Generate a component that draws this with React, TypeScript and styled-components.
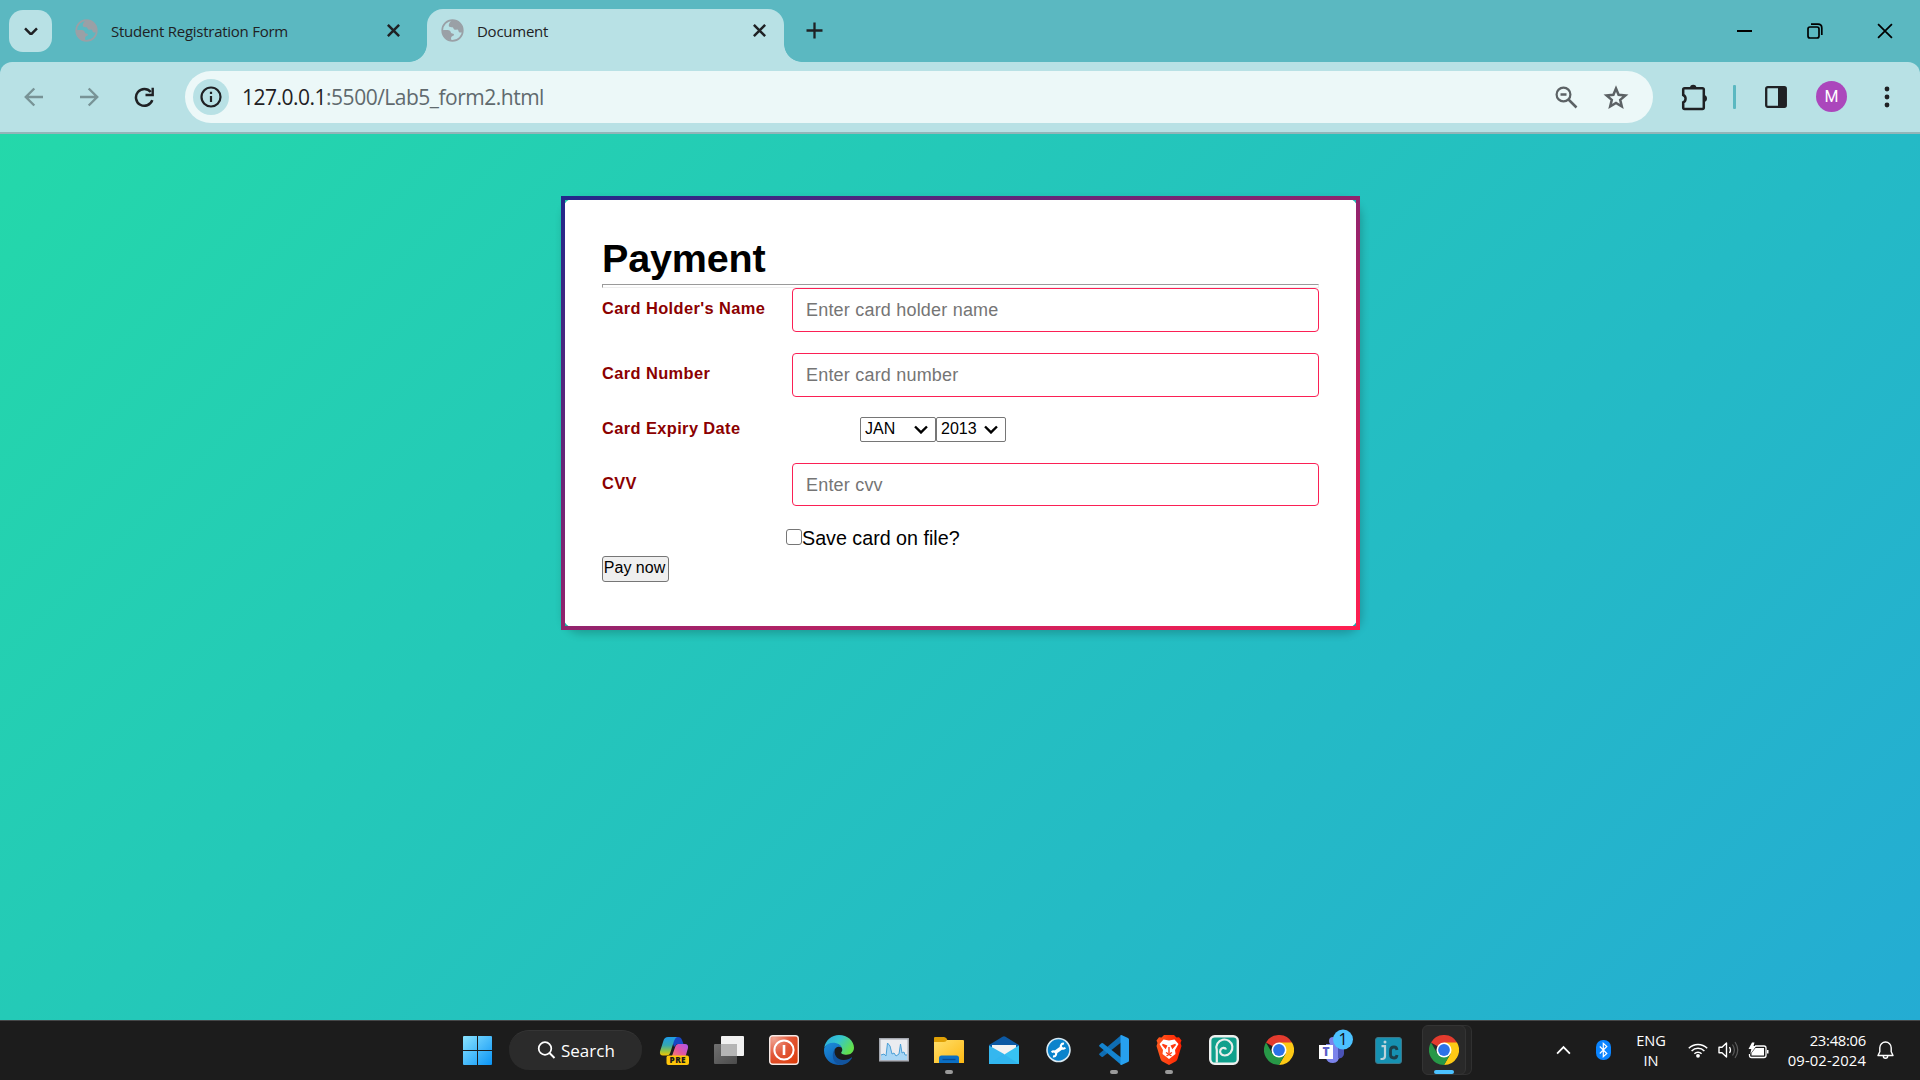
import React from "react";
import styled, { createGlobalStyle } from "styled-components";

const GlobalStyle = createGlobalStyle`
  * { box-sizing: border-box; }
  html, body { margin: 0; padding: 0; }
  body { width: 1920px; height: 1080px; overflow: hidden; }
`;

const UI = `"Open Sans", "Noto Sans", sans-serif`;
const ARIAL = `"Liberation Sans", Arial, sans-serif`;
const INK = "#1f2124";

const Screen = styled.div`
  display: flex;
  flex-direction: column;
  width: 1920px;
  height: 1080px;
  font-family: ${UI};
  color: ${INK};
`;

/* ---------- browser chrome ---------- */

const TabStrip = styled.header`
  display: flex;
  align-items: flex-start;
  height: 62px;
  flex: none;
  background: #5bb8c1;
`;

const TabSearch = styled.button`
  display: grid;
  place-items: center;
  width: 43px;
  height: 42px;
  margin: 10px 0 0 9px;
  padding: 0;
  border: 0;
  border-radius: 14px;
  background: #b8e1e5;
`;

const Tab = styled.div<{ $active?: boolean }>`
  position: relative;
  display: flex;
  align-items: center;
  width: ${(p) => (p.$active ? 357 : 366)}px;
  height: 53px;
  margin: 9px 0 0 ${(p) => (p.$active ? 0 : 9)}px;
  padding: 0 ${(p) => (p.$active ? 18 : 27)}px 10px 14px;
  border-radius: 16px 16px 0 0;
  background: ${(p) => (p.$active ? "#b8e1e5" : "transparent")};
  ${(p) =>
    p.$active &&
    `
    &::before, &::after {
      content: "";
      position: absolute;
      bottom: 0;
      width: 18px;
      height: 18px;
    }
    &::before { left: -18px; background: radial-gradient(circle at 0 0, transparent 17.5px, #b8e1e5 18.2px); }
    &::after { right: -18px; background: radial-gradient(circle at 100% 0, transparent 17.5px, #b8e1e5 18.2px); }
  `}
`;

const TabTitle = styled.span`
  flex: 1;
  margin-left: 13px;
  font-size: 15px;
  line-height: 22px;
  letter-spacing: -0.26px;
  padding-top: 1px;
`;

const NewTab = styled.div`
  margin: 22px 0 0 22px;
  height: 17px;
`;

const WindowButtons = styled.div`
  display: flex;
  margin-left: auto;
  height: 61px;
`;

const WindowButton = styled.div`
  display: grid;
  place-items: center;
  width: 70px;
  &:first-child { margin-right: 1px; }
`;

const Toolbar = styled.div`
  height: 72px;
  flex: none;
  background: #5bb8c1;
`;

const ToolbarInner = styled.div`
  display: flex;
  align-items: center;
  height: 72px;
  padding: 0 6px 0;
  border-radius: 12px 12px 0 0;
  background: #b8e1e5;
  border-bottom: 2px solid #93b5b9;
`;

const NavButton = styled.div`
  display: grid;
  place-items: center;
  width: 55px;
  &:nth-child(3) { padding-left: 2px; }
`;

const AddressBar = styled.div`
  display: flex;
  align-items: center;
  width: 1468px;
  height: 52px;
  margin-left: 14px;
  padding: 0 24px 0 8px;
  border-radius: 26px;
  background: #ecf8f8;
`;

const InfoBadge = styled.div`
  display: grid;
  place-items: center;
  width: 36px;
  height: 36px;
  border-radius: 50%;
  background: #b8e1e5;
`;

const Url = styled.span`
  flex: 1;
  margin-left: 13px;
  font-size: 21px;
  line-height: 30px;
  letter-spacing: -0.5px;
  color: #606a6e;
  b { font-weight: 400; color: ${INK}; }
`;

const UrlIcons = styled.div`
  display: flex;
  align-items: center;
  gap: 25px;
`;

const ToolbarEnd = styled.div`
  display: flex;
  align-items: center;
  margin-left: 28px;
`;

const Divider = styled.div`
  width: 3px;
  height: 24px;
  margin: 0 29px 0 25px;
  border-radius: 1px;
  background: #5bb8c1;
`;

const Avatar = styled.div`
  display: grid;
  place-items: center;
  width: 31px;
  height: 31px;
  margin: 0 37px 1px 29px;
  border-radius: 50%;
  background: #ab47bc;
  color: #fff;
  font: 400 16px Roboto, sans-serif;
`;

/* ---------- page ---------- */

const Page = styled.main`
  display: flex;
  justify-content: center;
  align-items: flex-start;
  flex: 1;
  padding: 62px 0 0 1px;
  background: linear-gradient(135deg, #24d8aa, #24acd3);
  font-family: ${ARIAL};
`;

const Card = styled.form`
  width: 799px;
  height: 434px;
  padding: 36px 37px 0;
  border: 4px solid transparent;
  border-image: linear-gradient(to bottom right, #23288a, #ff1f50) 1;
  border-radius: 19px;
  background: #fff;
  box-shadow: 2px 4px 8px rgba(0, 0, 0, 0.2);
  color: #000;
`;

const Heading = styled.h1`
  margin: 0;
  height: 48px;
  font-size: 39.5px;
  line-height: 45px;
  letter-spacing: -0.15px;
`;

const Rule = styled.hr`
  height: 4px;
  margin: 0;
  border: 1px solid;
  border-color: #9a9a9a #eee #eee #9a9a9a;
`;

const Row = styled.div<{ $gap: number }>`
  display: flex;
  align-items: flex-start;
  margin-bottom: ${(p) => p.$gap}px;
`;

const Label = styled.label<{ $top?: number }>`
  width: 190px;
  padding-top: ${(p) => p.$top ?? 11}px;
  font-size: 16.4px;
  font-weight: 700;
  line-height: 18px;
  letter-spacing: 0.4px;
  color: #8b0000;
`;

const Field = styled.input<{ $h?: number }>`
  flex: 1;
  height: ${(p) => p.$h ?? 44}px;
  padding: ${(p) => (p.$h ? 1 : 0)}px 13px 0;
  border: 1px solid #fb2055;
  border-radius: 4px;
  outline: 0;
  background: #fff;
  font: 18px ${ARIAL};
  letter-spacing: 0.2px;
  &::placeholder { color: #757575; opacity: 1; }
`;

const Selects = styled.div`
  display: flex;
  margin-left: 68px;
`;

const SelectBox = styled.div<{ $w: number }>`
  position: relative;
  width: ${(p) => p.$w}px;
  height: 25px;
  svg { position: absolute; right: 8px; top: 8px; }
`;

const Select = styled.select`
  appearance: none;
  width: 100%;
  height: 25px;
  padding: 0 4px 3px;
  border: 1px solid #767676;
  border-radius: 2px;
  background: #fff;
  font: 16px ${ARIAL};
  color: #000;
`;

const SaveRow = styled.label`
  display: flex;
  align-items: center;
  height: 24px;
  margin: 0 0 6px 184px;
  font-size: 19.7px;
  line-height: 24px;
`;

const Checkbox = styled.input`
  appearance: none;
  width: 16px;
  height: 16px;
  margin: 0 0 2px;
  border: 1px solid #767676;
  border-radius: 3px;
  background: #fff;
`;

const PayButton = styled.button`
  display: block;
  width: 67px;
  height: 26px;
  padding: 0 2px 3px 0;
  border: 1px solid #767676;
  border-radius: 3px;
  background: #efefef;
  font: 16px ${ARIAL};
  color: #000;
  white-space: nowrap;
`;

/* ---------- taskbar ---------- */

const Taskbar = styled.footer`
  display: flex;
  align-items: stretch;
  height: 60px;
  flex: none;
  padding-left: 450px;
  background: #1c1c1c;
  border-top: 1px solid #454748;
  color: #fff;
`;

const AppCell = styled.div<{ $state?: "running" | "focused" }>`
  position: relative;
  display: grid;
  place-items: center;
  width: 55px;
  padding-bottom: 1px;
  &::after {
    content: "";
    position: absolute;
    left: ${(p) => (p.$state === "focused" ? 18 : 24)}px;
    bottom: 6px;
    width: ${(p) => (p.$state === "focused" ? 20 : 8)}px;
    height: 4px;
    border-radius: 2px;
    background: ${(p) => (p.$state === "focused" ? "#4cc2ff" : p.$state ? "#9a9a9a" : "transparent")};
  }
`;

const FocusPlate = styled.div`
  display: grid;
  place-items: center;
  width: 44px;
  height: 50px;
  border: 1px solid #343434;
  border-radius: 6px;
  background: #292929;
  box-shadow: 6px 0 0 -1px #232323, 6px 0 0 0 #303030;
`;

const SearchPill = styled.div`
  display: flex;
  align-items: center;
  width: 133px;
  height: 40px;
  margin: 9px 4px 0;
  padding-left: 28px;
  border-radius: 20px;
  background: #2b2b2b;
  border-top: 1px solid #353535;
  font-size: 17px;
  letter-spacing: 0;
  gap: 5px;
`;

const Tray = styled.div`
  display: flex;
  align-items: center;
  margin-left: auto;
  padding: 0 26px 1px 0;
`;

const TrayIcon = styled.div<{ $w: number }>`
  display: grid;
  place-items: center;
  width: ${(p) => p.$w}px;
`;

const Language = styled.div`
  width: 56px;
  text-align: center;
  font-size: 14.6px;
  line-height: 20px;
  margin: 0 4px 0 0;
`;

const Clock = styled.div`
  width: 93px;
  text-align: right;
  font-size: 14.8px;
  line-height: 20px;
  letter-spacing: -0.28px;
  margin-right: 11px;
  white-space: nowrap;
`;

const DateLine = styled.div`
  letter-spacing: 0.1px;
`;

/* ---------- drawings ---------- */

const Globe = () => (
  <svg width="23" height="23" viewBox="0 0 23 23">
    <circle cx="11.5" cy="11.5" r="10.3" fill="none" stroke="#9aa0a6" strokeWidth="1.7" />
    <path d="M11.500 1.200C15 .8 20 3 21.600 8c.5 2 .4 3.500 0 5-.8.600-1.700.700-2.700.400-1.200-.300-1-2-1.800-2.600-1-.700-2 .500-3.500-.2-1-.500-.700-1.900-1.700-2.300-1-.300-3.500 0-3.800-1.400C7.900 4.900 9 3 11.500 1.200z" transform="translate(-.3 0)" fill="#9aa0a6" />
    <path d="M1.200 11.300c1.800-.300 5.500-.600 7.300.2 1.600.8 1 2.300 2 2.700 1 .500 2.500.300 2.500 1.500 0 1.300-1.800 1-2.500 2-.600 1-.500 2.300-.300 3.800A10.300 10.300 0 0 1 1.200 11.300z" fill="#9aa0a6" />
  </svg>
);

const Cross = ({ size = 12, w = 2.3, color = INK }: { size?: number; w?: number; color?: string }) => (
  <svg width={size} height={size} viewBox="0 0 12 12">
    <path d="M.8.8l10.400 10.400M11.200.8L.8 11.200" stroke={color} strokeWidth={w} />
  </svg>
);

const Arrow = ({ flip }: { flip?: boolean }) => (
  <svg width="20" height="20" viewBox="0 0 20 20" transform={flip ? "scale(-1 1)" : undefined}>
    <path d="M19 10H2.500M10.300 1.500L1.800 10l8.500 8.500" fill="none" stroke="#789396" strokeWidth="2.400" />
  </svg>
);

const Reload = () => (
  <svg width="21" height="21" viewBox="0 0 21 21">
    <path d="M18.300 13.200A8.400 8.400 0 1 1 16.800 5" fill="none" stroke={INK} strokeWidth="2.500" />
    <path d="M19.900.8v8.400h-8.400V6.800h6V.8z" fill={INK} />
  </svg>
);

const Info = () => (
  <svg width="22" height="22" viewBox="0 0 22 22">
    <circle cx="11" cy="11" r="9.500" fill="none" stroke={INK} strokeWidth="2.200" />
    <path d="M11 10v6M11 5.700v2.400" stroke={INK} strokeWidth="2.200" />
  </svg>
);

const ZoomOut = () => (
  <svg width="23" height="23" viewBox="0 0 23 23">
    <circle cx="8.500" cy="8.500" r="6.900" fill="none" stroke="#5c6265" strokeWidth="2.200" />
    <path d="M13.500 13.500l8 8M5.500 8.500h6" stroke="#5c6265" strokeWidth="2.500" />
  </svg>
);

const Star = () => (
  <svg width="26" height="25" viewBox="0 0 26 25">
    <path d="M13 3.500l2.600 6.300 6.800.6-5.200 4.500 1.600 6.600-5.800-3.500-5.800 3.500 1.600-6.600-5.200-4.500 6.800-.6z" fill="none" stroke="#5c6265" strokeWidth="2.500" />
  </svg>
);

const Puzzle = () => (
  <svg width="27" height="27" viewBox="0 0 27 27">
    <path d="M2.200 5.600q0-1.400 1.400-1.400h17.800q1.400 0 1.400 1.400v18q0 1.400-1.400 1.400H3.600q-1.400 0-1.400-1.400v-5.300a4 4 0 0 0 0-7.300z" fill="none" stroke={INK} strokeWidth="2.500" />
    <path d="M9 4a3.200 3.200 0 0 1 6.400 0zM22.500 11a3.300 3.300 0 0 1 0 7z" fill={INK} />
  </svg>
);

const SidePanel = () => (
  <svg width="22" height="22" viewBox="0 0 22 22">
    <rect x="1.200" y="1.200" width="19.600" height="19.600" rx="1.500" fill="none" stroke={INK} strokeWidth="2.300" />
    <path d="M13 1h7.500v20H13z" fill={INK} />
  </svg>
);

const Chevron = ({ w = 13, color = "#000", sw = 2.2, up }: { w?: number; color?: string; sw?: number; up?: boolean }) => (
  <svg width={w} height={w * 0.64} viewBox="0 0 14 9">
    <path d={up ? "M1 8l6-6 6 6" : "M1 1.500l6 6 6-6"} fill="none" stroke={color} strokeWidth={sw} />
  </svg>
);

const WindowsLogo = () => (
  <svg width="29" height="29" viewBox="0 0 29 29">
    <defs>
      <linearGradient id="win" x1="0" y1="0" x2="1" y2="1">
        <stop offset="0" stopColor="#8ae3ff" />
        <stop offset="1" stopColor="#0a94f5" />
      </linearGradient>
    </defs>
    <path d="M1 0h13v14H0V1q0-1 1-1zM15 0h13q1 0 1 1v13H15zM0 15h14v14H1q-1 0-1-1zM15 15h14v13q0 1-1 1H15z" fill="url(#win)" />
  </svg>
);

const SearchGlyph = () => (
  <svg width="19" height="19" viewBox="0 0 19 19">
    <circle cx="8" cy="7.500" r="6.300" fill="none" stroke="#fff" strokeWidth="1.700" />
    <path d="M12.500 12l5 5" stroke="#fff" strokeWidth="2" />
  </svg>
);

const Copilot = () => (
  <svg width="30" height="30" viewBox="0 0 30 30">
    <defs>
      <linearGradient id="cpA" x1="0" y1="0" x2="0" y2="1">
        <stop offset="0" stopColor="#1e9be8" />
        <stop offset=".45" stopColor="#36a7b0" />
        <stop offset=".75" stopColor="#8fc247" />
        <stop offset="1" stopColor="#f5c400" />
      </linearGradient>
      <linearGradient id="cpB" x1="1" y1="0" x2="0" y2="1">
        <stop offset="0" stopColor="#a855f0" />
        <stop offset=".5" stopColor="#e455a0" />
        <stop offset="1" stopColor="#ff8a5c" />
      </linearGradient>
    </defs>
    <path d="M12 2h7q3 0 4 3l1.500 4h-6.500l-3 3z" fill="#1747c5" />
    <path d="M9 2h9q-2 1-3 4l-3.500 11q-1 3.500-4 3.500H4Q.3 20.500 1 16.500L4.500 5.500Q5.500 2 9 2z" fill="url(#cpA)" />
    <path d="M19.500 9H26q3.500 0 3 4l-2 7q-1 4-5 4h-6q-4 0-3-3l3-8.500q1-3.500 3.500-3.500z" fill="url(#cpB)" />
    <rect x="7.500" y="20.500" width="22.500" height="9.500" rx="2" fill="#ffc60a" />
    <text x="18.800" y="28" textAnchor="middle" fontFamily="Open Sans, sans-serif" fontSize="8.200" fontWeight="800" letterSpacing=".4" fill="#1a1a1a">PRE</text>
  </svg>
);

const TaskView = () => (
  <svg width="30" height="28" viewBox="0 0 30 28">
    <defs>
      <linearGradient id="tvA" x1="0" y1="0" x2="1" y2="1">
        <stop offset="0" stopColor="#707070" />
        <stop offset="1" stopColor="#4b4b4b" />
      </linearGradient>
    </defs>
    <rect y="8" width="23" height="20" rx="1" fill="url(#tvA)" />
    <rect x="7" width="23" height="20" rx="1" fill="#f1f1f1" />
    <path d="M7 8h16v12H8q-1 0-1-1z" fill="#b5b5b5" />
  </svg>
);

const Power = () => (
  <svg width="30" height="30" viewBox="0 0 30 30">
    <defs>
      <radialGradient id="pw" cx=".15" cy=".1" r="1.100">
        <stop offset="0" stopColor="#f0a391" />
        <stop offset=".5" stopColor="#e2593b" />
        <stop offset="1" stopColor="#dd3d0c" />
      </radialGradient>
    </defs>
    <rect x=".7" y=".7" width="28.600" height="28.600" rx="3" fill="url(#pw)" stroke="#f5e9e6" strokeWidth="1.400" />
    <circle cx="15" cy="15" r="9.600" fill="none" stroke="#fff" strokeWidth="2" />
    <path d="M15 10v10" stroke="#fff" strokeWidth="2.600" />
  </svg>
);

const Edge = () => (
  <svg width="30" height="30" viewBox="0 0 30 30">
    <defs>
      <linearGradient id="edA" x1="0" y1="0" x2="1" y2=".5">
        <stop offset="0" stopColor="#2ba8e0" />
        <stop offset=".5" stopColor="#35c6cf" />
        <stop offset="1" stopColor="#62e04c" />
      </linearGradient>
      <linearGradient id="edB" x1="0" y1="0" x2=".6" y2="1">
        <stop offset="0" stopColor="#1b8fdc" />
        <stop offset="1" stopColor="#1160b4" />
      </linearGradient>
    </defs>
    <path d="M.3 12.500C1.500 5 7.800 0 15 0c8.500 0 15 6 15 12.800 0 4.200-3.200 7-7.500 7-3.500 0-5.700-1.300-5.200-2.600 1.200-1 1.400-3.200.200-5C14 7.500 5 7 .3 12.500z" fill="url(#edA)" />
    <path d="M.2 13C2 9 6.500 7.300 10.500 7.800c4 .500 6.500 2.500 7.300 5-3-2.200-6.500-1-7.500 2.700-1.500 6 3 11.500 8.500 13.800C9 32 0 25 0 15.500z" fill="url(#edB)" />
    <path d="M11 13.500c-2 6 2.500 12 9 11.500 3.300-.2 5.500-1.300 7.500-2.600.5-.2.700.2.500.6C25.500 27.500 21 30 16.500 30 9 29 6.500 19.500 11 13.500z" fill="#12549e" />
  </svg>
);

const Monitor = () => (
  <svg width="30" height="24" viewBox="0 0 30 24">
    <rect x=".8" y=".8" width="28.400" height="22" fill="#ebecf0" stroke="#a9adb5" strokeWidth="1.500" />
    <path d="M2 17l3-1 2 2 1.500-13L11 8l2 8 2-1 2 3 3-2 1.500-10L23 15l2-1 1 3h2v5H2z" fill="#a8d6f5" />
    <path d="M2 17l3-1 2 2 1.500-13L11 8l2 8 2-1 2 3 3-2 1.500-10L23 15l2-1 1 3h2" fill="none" stroke="#4b9fd6" strokeWidth="1" />
  </svg>
);

const Folder = () => (
  <svg width="30" height="27" viewBox="0 0 30 27">
    <defs>
      <linearGradient id="fo" x1="0" y1="0" x2="1" y2="1">
        <stop offset="0" stopColor="#ffdf6b" />
        <stop offset="1" stopColor="#fdb813" />
      </linearGradient>
    </defs>
    <path d="M0 1q0-1 1-1h9q1.500 0 2.500 1.500L14 4v6H0z" fill="#dfa006" />
    <path d="M13 3h16q1 0 1 1v22H0V5h10q2 0 3-2z" fill="url(#fo)" />
    <path d="M5 26v-5q0-2.500 2.500-2.500h15Q25 18.500 25 21v5z" fill="#0b6fc4" />
    <path d="M8.500 22.500h13" stroke="#064a94" strokeWidth="1.300" />
  </svg>
);

const Mail = () => (
  <svg width="30" height="28" viewBox="0 0 30 28">
    <path d="M0 9L13.500.8q1.500-1 3 0L30 9v3H0z" fill="#0c59a4" />
    <path d="M3 9h24v8l-12 5L3 16z" fill="#f3f3f3" />
    <path d="M0 9.500L15 18v10H0z" fill="#35b7ef" />
    <path d="M30 9.500V28H0z" fill="#37c2f3" />
    <path d="M15 18.300L30 28H0z" fill="#2ba9ea" opacity=".45" />
  </svg>
);

const Wrench = () => (
  <svg width="25" height="26" viewBox="0 0 25 26">
    <circle cx="12.500" cy="13" r="11.500" fill="#0a83cc" stroke="#d9e9f2" strokeWidth="1.600" />
    <path d="M9 15.500l7-5" stroke="#fff" strokeWidth="3.400" />
    <path d="M5.700 15.300a2.500 2.500 0 1 1 1.300 4M19.300 10.700a2.500 2.500 0 1 1-1.300-4" fill="none" stroke="#fff" strokeWidth="2.100" />
  </svg>
);

const VsCode = () => (
  <svg width="30" height="30" viewBox="0 0 30 30">
    <path d="M22 7.500L4 21.800q-.8.500-1.500 0L.5 20q-.8-.8 0-1.600L22 .3z" fill="#0f6db3" />
    <path d="M22 22.500L4 8.200q-.8-.5-1.500 0L.5 10q-.8.800 0 1.600L22 29.700z" fill="#1484cf" />
    <path d="M21.500.3q.8-.4 1.500 0l6 2.800q1 .5 1 1.500v20.800q0 1-1 1.500l-6 2.800q-.7.400-1.500 0z" fill="#27a0ef" />
  </svg>
);

const Brave = () => (
  <svg width="26" height="30" viewBox="0 0 26 30">
    <defs>
      <linearGradient id="br" x1="0" x2="1">
        <stop offset="0" stopColor="#ff5a1f" />
        <stop offset="1" stopColor="#ff2000" />
      </linearGradient>
    </defs>
    <path d="M8 0h10l2.500 2.500 2.500-.3 2.500 3.300-1 2.500 1 3-4 13q-.5 1.500-1.500 2.200L13 30l-7-3.800q-1-.7-1.500-2.200l-4-13 1-3-1-2.500L3 2.200l2.500.3z" fill="url(#br)" />
    <path d="M7.500 4.500l5.500 1 5.500-1L22.500 9l-3.500 6 .5 4-6.500 5-6.500-5 .5-4-3.500-6z" fill="#fff" />
    <path d="M6.500 9.500l4 1.500-1 2zM19.500 9.500l-4 1.500 1 2zM13 12v6M10 17.500l3 1.800 3-1.800M10.500 21l2.500-1.500 2.500 1.500" fill="none" stroke="#ff3a10" strokeWidth="1.400" />
  </svg>
);

const Swirl = () => (
  <svg width="30" height="30" viewBox="0 0 30 30">
    <rect x="1.200" y="1.200" width="27.600" height="27.600" rx="4.500" fill="#0fa08c" stroke="#eef0ef" strokeWidth="2.400" />
    <path d="M7.800 27.500V15a8 8 0 1 1 8 5.500c-3.800 0-5.500-3-4.300-5.700 1.200-2.600 4.800-2.600 5.500-.3" fill="none" stroke="#e8efec" strokeWidth="2.200" />
  </svg>
);

const Chrome = () => (
  <svg width="30" height="30" viewBox="0 0 30 30">
    <path d="M15 15L2 7.500A15 15 0 0 1 28 7.500z" fill="#e33b2e" />
    <path d="M15 7.500h13A15 15 0 0 1 15 30l6.500-11.300z" fill="#fdc915" />
    <path d="M2 7.500A15 15 0 0 0 15 30l6.500-11.300L15 15l-6.500 3.700z" fill="#279847" />
    <circle cx="15" cy="15" r="7.500" fill="#fff" />
    <circle cx="15" cy="15" r="5.900" fill="#2b72e8" />
  </svg>
);

const Teams = () => (
  <svg width="36" height="34" viewBox="0 0 36 34">
    <path d="M18 13h9v7q0 7-6 8-5-1-6-5z" fill="#5b62c9" />
    <path d="M10 13h13v12q0 7-6 7t-7-5z" fill="#7b83eb" />
    <path d="M22 15h6v8q-1 5-6 4z" fill="#4a52b5" />
    <circle cx="17" cy="10" r="4" fill="#7b83eb" />
    <rect x="3" y="14" width="14" height="14" fill="#fff" />
    <text x="10" y="25.300" textAnchor="middle" fontFamily="Open Sans, sans-serif" fontSize="12" fontWeight="800" fill="#5b5fc7">T</text>
    <circle cx="27" cy="8.500" r="10" fill="#4cc2ff" />
    <text x="27" y="14" textAnchor="middle" fontFamily="Open Sans, sans-serif" fontSize="16" fill="#111">1</text>
  </svg>
);

const TeamsHolder = styled.div`
  display: grid;
  place-items: center;
  height: 38px;
  padding-bottom: 4px;
  svg { overflow: visible; }
`;

const Ic = () => (
  <svg width="27" height="27" viewBox="0 0 27 27">
    <rect x=".5" y=".5" width="26" height="26" rx="2.500" fill="#1691b2" stroke="#3d7687" />
    <path d="M6.500 9.200h3.500V19q0 3-3 3H5.500" fill="none" stroke="#bdd4db" strokeWidth="2.200" />
    <circle cx="10" cy="4.900" r="1.500" fill="#bdd4db" />
    <path d="M22 13q-.3-3-3-3-3.500 0-3.500 3.500v4q0 3.500 3.500 3.500 2.700 0 3-3" fill="none" stroke="#1c3f4b" strokeWidth="2.800" />
  </svg>
);

const Bluetooth = () => (
  <svg width="15" height="20" viewBox="0 0 15 20">
    <rect width="15" height="20" rx="7" fill="#0a84ff" />
    <path d="M3.800 6.500l7 7-3.500 3.200V3.300l3.500 3.200-7 7" fill="none" stroke="#fff" strokeWidth="1.200" />
  </svg>
);

const Wifi = () => (
  <svg width="20" height="16" viewBox="0 0 20 16">
    <path d="M.8 6.200a13 13 0 0 1 18.400 0M3.600 9a9 9 0 0 1 12.800 0M6.400 11.800a5.100 5.100 0 0 1 7.200 0" fill="none" stroke="#fff" strokeWidth="1.500" />
    <circle cx="10" cy="13.800" r="1.900" fill="#fff" />
  </svg>
);

const Volume = () => (
  <svg width="21" height="18" viewBox="0 0 21 18">
    <path d="M1 6.300h3L8.500 2v14L4 11.700H1z" fill="none" stroke="#fff" strokeWidth="1.400" strokeLinejoin="round" />
    <path d="M11.500 6q2 3 0 6" fill="none" stroke="#fff" strokeWidth="1.300" />
    <path d="M14.500 3.500q3.800 5.500 0 11M17 1q5.500 8 0 16" fill="none" stroke="#5c5c5c" strokeWidth="1.200" />
  </svg>
);

const Battery = () => (
  <svg width="21" height="17" viewBox="0 0 21 17">
    <path d="M7 4h9q2 0 2 2v7.500q0 2-2 2H3.500q-2 0-2-2V12" fill="none" stroke="#fff" strokeWidth="1.300" />
    <path d="M7.500 6H16v7.500H3.500V11z" fill="#fff" />
    <path d="M4 .5h2.500L5.500 4h2.800L2.300 12l1-5H.5zM19 8h1.500v3.500H19z" fill="#fff" />
  </svg>
);

const Bell = () => (
  <svg width="17" height="19" viewBox="0 0 17 19">
    <path d="M8.500 1a5.700 5.700 0 0 0-5.700 5.700v4L1 14.500h15l-1.800-3.800v-4A5.700 5.700 0 0 0 8.500 1zM6.300 15a2.200 2.200 0 0 0 4.400 0" fill="none" stroke="#fff" strokeWidth="1.400" strokeLinejoin="round" />
  </svg>
);

/* ---------- data ---------- */

type AppEntry = { id: string; icon: React.ReactNode; state?: "running" | "focused" };

const apps: AppEntry[] = [
  { id: "copilot", icon: <Copilot /> },
  { id: "taskview", icon: <TaskView /> },
  { id: "power", icon: <Power /> },
  { id: "edge", icon: <Edge /> },
  { id: "monitor", icon: <Monitor /> },
  { id: "explorer", icon: <Folder />, state: "running" },
  { id: "mail", icon: <Mail /> },
  { id: "support", icon: <Wrench /> },
  { id: "vscode", icon: <VsCode />, state: "running" },
  { id: "brave", icon: <Brave />, state: "running" },
  { id: "swirl", icon: <Swirl /> },
  { id: "chrome", icon: <Chrome /> },
  { id: "teams", icon: <TeamsHolder><Teams /></TeamsHolder> },
  { id: "ic", icon: <Ic /> },
];

export default function App() {
  return (
    <Screen>
      <GlobalStyle />
      <TabStrip>
        <TabSearch>
          <Chevron w={14} color={INK} sw={2.5} />
        </TabSearch>
        <Tab>
          <Globe />
          <TabTitle>Student Registration Form</TabTitle>
          <Cross size={13} />
        </Tab>
        <Tab $active>
          <Globe />
          <TabTitle>Document</TabTitle>
          <Cross size={13} />
        </Tab>
        <NewTab>
          <svg width="17" height="17" viewBox="0 0 17 17">
            <path d="M8.500.5v16M.5 8.500h16" stroke={INK} strokeWidth="2.300" />
          </svg>
        </NewTab>
        <WindowButtons>
          <WindowButton>
            <svg width="15" height="2"><path d="M0 1h15" stroke="#000" strokeWidth="2" /></svg>
          </WindowButton>
          <WindowButton>
            <svg width="16" height="16" viewBox="0 0 16 16">
              <rect x="1" y="4" width="11" height="11" rx="2" fill="none" stroke="#000" strokeWidth="1.700" />
              <path d="M4 1.200h7q3.800 0 3.800 3.800v7" fill="none" stroke="#000" strokeWidth="1.700" />
            </svg>
          </WindowButton>
          <WindowButton>
            <Cross size={16} w={1.3} color="#000" />
          </WindowButton>
        </WindowButtons>
      </TabStrip>
      <Toolbar>
        <ToolbarInner>
          <NavButton><Arrow /></NavButton>
          <NavButton><Arrow flip /></NavButton>
          <NavButton><Reload /></NavButton>
          <AddressBar>
            <InfoBadge><Info /></InfoBadge>
            <Url><b>127.0.0.1</b>:5500/Lab5_form2.html</Url>
            <UrlIcons>
              <ZoomOut />
              <Star />
            </UrlIcons>
          </AddressBar>
          <ToolbarEnd>
            <Puzzle />
            <Divider />
            <SidePanel />
            <Avatar>M</Avatar>
            <svg width="6" height="22" viewBox="0 0 6 22">
              <g fill={INK}>
                <circle cx="3" cy="3" r="2.400" />
                <circle cx="3" cy="11" r="2.400" />
                <circle cx="3" cy="19" r="2.400" />
              </g>
            </svg>
          </ToolbarEnd>
        </ToolbarInner>
      </Toolbar>
      <Page>
        <Card>
          <Heading>Payment</Heading>
          <Rule />
          <Row $gap={21}>
            <Label>Card Holder's Name</Label>
            <Field placeholder="Enter card holder name" />
          </Row>
          <Row $gap={20}>
            <Label>Card Number</Label>
            <Field placeholder="Enter card number" />
          </Row>
          <Row $gap={21}>
            <Label $top={2}>Card Expiry Date</Label>
            <Selects>
              <SelectBox $w={76}>
                <Select defaultValue="JAN"><option>JAN</option></Select>
                <Chevron w={14} sw={2.4} />
              </SelectBox>
              <SelectBox $w={70}>
                <Select defaultValue="2013"><option>2013</option></Select>
                <Chevron w={14} sw={2.4} />
              </SelectBox>
            </Selects>
          </Row>
          <Row $gap={20}>
            <Label>CVV</Label>
            <Field $h={43} placeholder="Enter cvv" />
          </Row>
          <SaveRow>
            <Checkbox type="checkbox" />
            Save card on file?
          </SaveRow>
          <PayButton type="button">Pay now</PayButton>
        </Card>
      </Page>
      <Taskbar>
        <AppCell><WindowsLogo /></AppCell>
        <SearchPill>
          <SearchGlyph />
          Search
        </SearchPill>
        {apps.map((a) => (
          <AppCell key={a.id} $state={a.state}>{a.icon}</AppCell>
        ))}
        <AppCell $state="focused">
          <FocusPlate><Chrome /></FocusPlate>
        </AppCell>
        <Tray>
          <TrayIcon $w={40}><Chevron w={15} color="#fff" sw={1.7} up /></TrayIcon>
          <TrayIcon $w={40}><Bluetooth /></TrayIcon>
          <Language>ENG<br />IN</Language>
          <TrayIcon $w={30}><Wifi /></TrayIcon>
          <TrayIcon $w={30}><Volume /></TrayIcon>
          <TrayIcon $w={30}><Battery /></TrayIcon>
          <Clock>
            23:48:06
            <DateLine>09-02-2024</DateLine>
          </Clock>
          <Bell />
        </Tray>
      </Taskbar>
    </Screen>
  );
}
